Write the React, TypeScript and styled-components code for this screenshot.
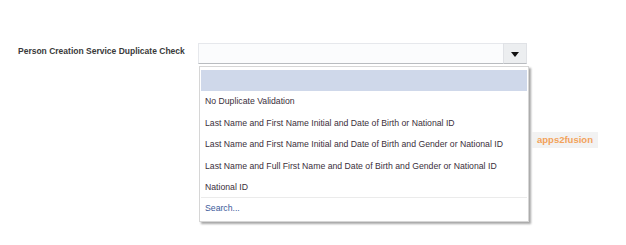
import React from "react"
import styled, { createGlobalStyle } from "styled-components"

const GlobalStyle = createGlobalStyle`
  html, body {
    margin: 0;
    padding: 0;
    background: #ffffff;
  }
  body {
    width: 626px;
    height: 245px;
    overflow: hidden;
    font-family: "Liberation Sans", Arial, sans-serif;
  }
`

const Page = styled.div`
  position: relative;
  width: 626px;
  height: 245px;
`

const FieldRow = styled.div`
  display: flex;
  flex-direction: row;
  align-items: flex-start;
  padding: 43px 0 0 18px;
`

const Label = styled.label`
  width: 180px;
  font-size: 8.5px;
  font-weight: bold;
  color: #3a3a3a;
  line-height: 14px;
  white-space: nowrap;
  padding-top: 1px;
`

const Combo = styled.div`
  position: relative;
  display: flex;
  flex-direction: row;
  width: 329px;
  height: 21px;
`

const Input = styled.div`
  flex: 1;
  background: #fbfcfd;
  border: 1px solid #e6e8ec;
  border-bottom-color: #b9bcc0;
  border-right: none;
`

const ArrowButton = styled.div`
  width: 22px;
  display: flex;
  align-items: center;
  justify-content: center;
  background: #eceef0;
  border: 1px solid #e0e2e6;
  border-bottom-color: #b9bcc0;
`

const Arrow = styled.span`
  width: 0;
  height: 0;
  border-left: 4px solid transparent;
  border-right: 4px solid transparent;
  border-top: 5px solid #111;
  margin-top: 2px;
`

const Menu = styled.ul`
  position: absolute;
  top: 23px;
  left: 1px;
  width: 326px;
  margin: 0;
  padding: 3px 1px 1px 1px;
  list-style: none;
  background: #ffffff;
  border: 1px solid #d6d6d6;
  box-shadow: 2px 2px 2px rgba(0, 0, 0, 0.35);
`

const Item = styled.li<{ $selected?: boolean; $link?: boolean; $divided?: boolean }>`
  height: 21.4px;
  line-height: 21.4px;
  padding: 0 4px;
  font-size: 8.7px;
  white-space: nowrap;
  color: ${({ $link }) => ($link ? "#3b5a9a" : "#3b2f3b")};
  background: ${({ $selected }) => ($selected ? "#cfd8ea" : "transparent")};
  border-top: ${({ $divided }) => ($divided ? "1px solid #ebebeb" : "none")};
  margin-top: ${({ $divided }) => ($divided ? "-1px" : "0")};
`

const Watermark = styled.div`
  position: absolute;
  left: 532px;
  top: 132px;
  padding: 1px 5px;
  background: #f2f2f2;
  color: #f2a25a;
  font-size: 9.5px;
  font-weight: bold;
  line-height: 14px;
`

const options = [
  "No Duplicate Validation",
  "Last Name and First Name Initial and Date of Birth or National ID",
  "Last Name and First Name Initial and Date of Birth and Gender or National ID",
  "Last Name and Full First Name and Date of Birth and Gender or National ID",
  "National ID",
]

const App: React.FC = () => (
  <>
    <GlobalStyle />
    <Page>
      <FieldRow>
        <Label>Person Creation Service Duplicate Check</Label>
        <Combo>
          <Input />
          <ArrowButton>
            <Arrow />
          </ArrowButton>
          <Menu>
            <Item $selected>&nbsp;</Item>
            {options.map((o) => (
              <Item key={o}>{o}</Item>
            ))}
            <Item $link $divided>Search...</Item>
          </Menu>
        </Combo>
      </FieldRow>
      <Watermark>apps2fusion</Watermark>
    </Page>
  </>
)

export default App
